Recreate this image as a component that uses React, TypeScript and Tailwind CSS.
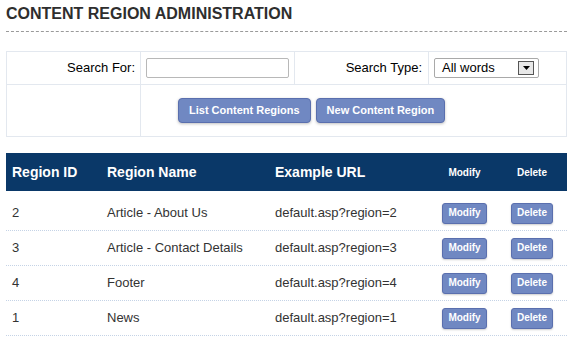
import React from "react";

type Region = {
    id: number
    name: string
    url: string
}

const regions: Region[] = [
    { id: 2, name: "Article - About Us", url: "default.asp?region=2" },
    { id: 3, name: "Article - Contact Details", url: "default.asp?region=3" },
    { id: 4, name: "Footer", url: "default.asp?region=4" },
    { id: 1, name: "News", url: "default.asp?region=1" },
];

function SmallButton({ label }: { label: string }) {
    return (
        <button className="h-[21px] px-[5px] rounded-[3px] border border-[#5a6fae] bg-[#7088c2] text-white text-[10px] font-bold leading-none shadow-[0_1px_2px_rgba(0,0,0,0.2)]">
            {label}
        </button>
    );
}

function BigButton({ label }: { label: string }) {
    return (
        <button className="h-[25px] px-[10px] rounded-[4px] border border-[#5a6fae] bg-[#7088c2] text-white text-[11px] font-bold leading-none shadow-[0_1px_3px_rgba(0,0,0,0.25)]">
            {label}
        </button>
    );
}

export default function App() {
    return (
        <div className="w-[573px] h-[343px] bg-white px-[6px] pt-[5px] font-['Liberation_Sans',Arial,sans-serif] text-[13px] text-[#333]">
            <h1 className="text-[16px] font-bold text-[#2e2e2e] leading-[18px]">CONTENT REGION ADMINISTRATION</h1>
            <div className="mt-[8px] border-t border-dashed border-[#9a9a9a]" />

            {/* search panel */}
            <div className="mt-[19px] border border-[#e3e8ef] text-black">
                <div className="grid grid-cols-[134px_154px_134px_1fr] h-[33px] border-b border-[#e3e8ef]">
                    <div className="flex items-center justify-end pr-[5px] border-r border-[#e3e8ef]">Search For:</div>
                    <div className="flex items-center pl-[5px] border-r border-[#e3e8ef]">
                        <input className="w-[143px] h-[20px] border border-[#b8b8b8] rounded-[2px] bg-white outline-none" />
                    </div>
                    <div className="flex items-center justify-end pr-[6px] border-r border-[#e3e8ef]">Search Type:</div>
                    <div className="flex items-center pl-[5px]">
                        <div className="w-[105px] h-[20px] border border-[#a9a9a9] rounded-[2px] flex items-center justify-between pl-[7px] pr-[4px] bg-white">
                            <span>All words</span>
                            <span className="w-[16px] h-[14px] border border-[#555] bg-[#e8e8e8] flex items-center justify-center">
                                <svg width="7" height="4" viewBox="0 0 7 4"><path d="M0 0h7L3.5 4z" fill="#000" /></svg>
                            </span>
                        </div>
                    </div>
                </div>
                <div className="grid grid-cols-[134px_1fr] h-[51px]">
                    <div className="border-r border-[#e3e8ef]" />
                    <div className="flex items-center gap-[5px] pl-[37px]">
                        <BigButton label="List Content Regions" />
                        <BigButton label="New Content Region" />
                    </div>
                </div>
            </div>

            {/* regions table */}
            <div className="mt-[16px]">
                <div className="grid grid-cols-[95px_168px_163px_65px_70px] h-[38px] items-center bg-[#0a3868] text-white font-bold">
                    <div className="pl-[6px] text-[14px]">Region ID</div>
                    <div className="pl-[6px] text-[14px]">Region Name</div>
                    <div className="pl-[6px] text-[14px]">Example URL</div>
                    <div className="text-center text-[10px]">Modify</div>
                    <div className="text-center text-[10px]">Delete</div>
                </div>
                <div className="pt-[5px]">
                    {regions.map((r) => (
                        <div key={r.id} className="grid grid-cols-[95px_168px_163px_65px_70px] h-[35px] items-center border-b border-dotted border-[#c5d3e6]">
                            <div className="pl-[6px]">{r.id}</div>
                            <div className="pl-[6px]">{r.name}</div>
                            <div className="pl-[6px]">{r.url}</div>
                            <div className="flex justify-center"><SmallButton label="Modify" /></div>
                            <div className="flex justify-center"><SmallButton label="Delete" /></div>
                        </div>
                    ))}
                </div>
            </div>
        </div>
    );
}
